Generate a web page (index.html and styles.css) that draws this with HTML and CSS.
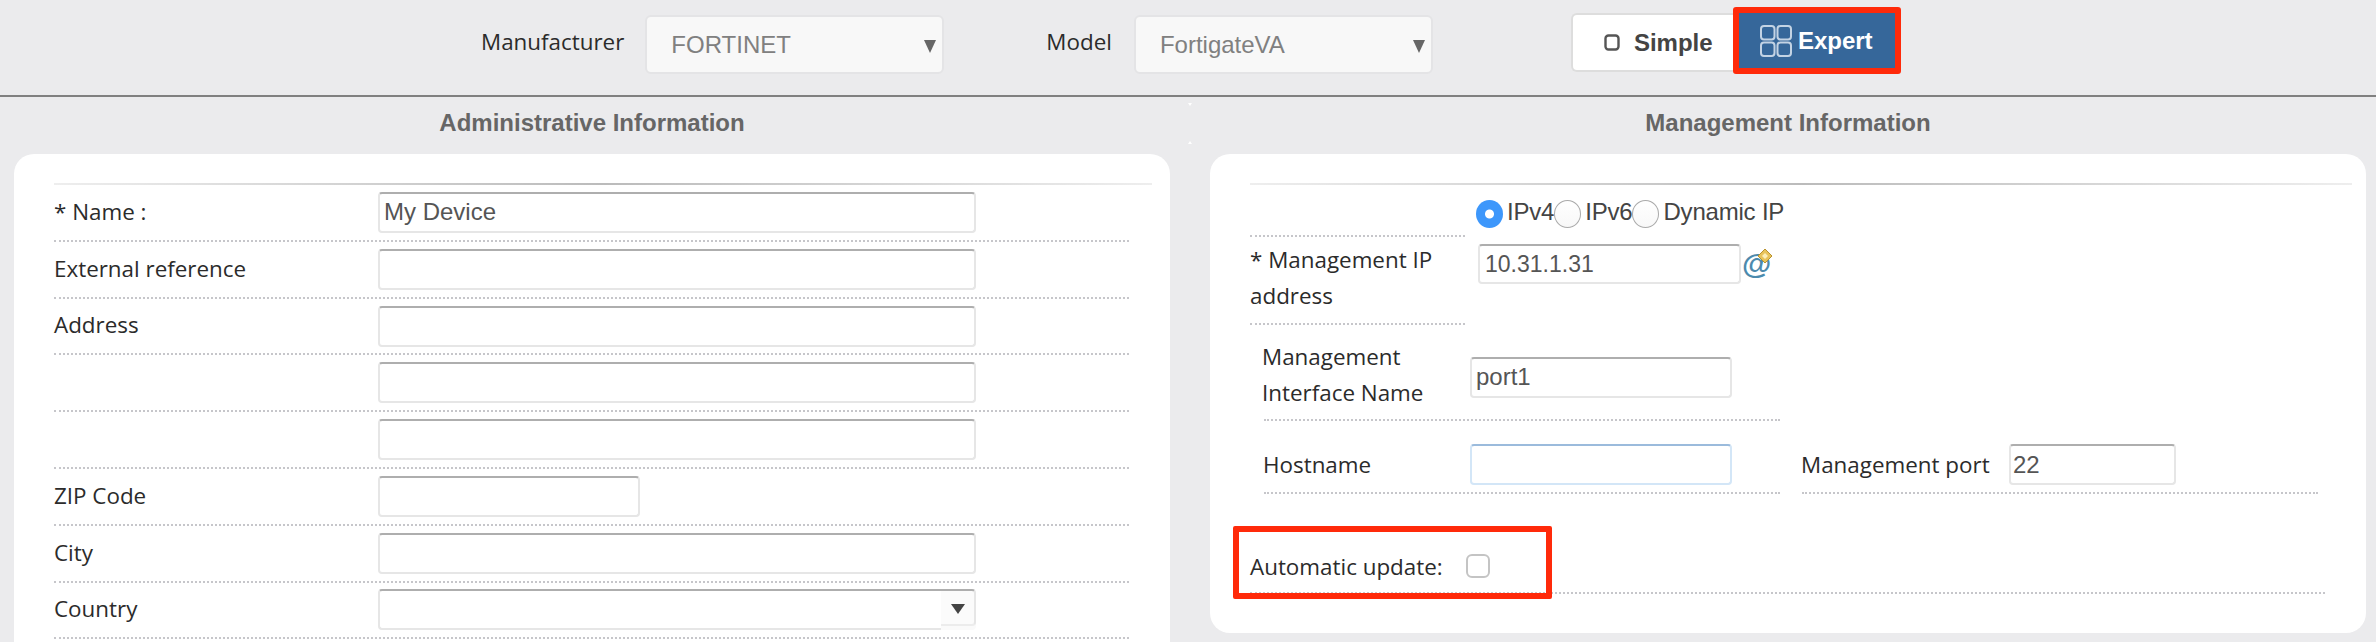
FILE: index.html
```html
<!DOCTYPE html>
<html lang="en">
    <head>
        <meta charset="UTF-8">
        <meta name="viewport" content="width=device-width, initial-scale=1.0">
        <title>Device settings</title>
        <link rel="stylesheet" href="styles.css">
    </head>
    <body>
        <div id="topbar">
            <label class="top_label">Manufacturer</label>
            <div class="top_select">
                <span>FORTINET</span>
                <span class="top_arrow"></span>
            </div>
            <label class="top_label model_label">Model</label>
            <div class="top_select">
                <span>FortigateVA</span>
                <span class="top_arrow"></span>
            </div>
            <div class="toggle">
                <div class="toggle_simple">
                    <svg class="icon_simple" width="16" height="17" viewBox="0 0 16 17"><rect x="1.5" y="1.5" width="13" height="14" rx="3" fill="#fff" stroke="#555" stroke-width="2.4"/></svg>
                    Simple
                </div>
                <div class="toggle_expert">
                    <svg class="icon_expert" width="32" height="32" viewBox="0 0 32 32">
                        <rect x="1" y="1" width="13.5" height="13.5" rx="3"/>
                        <rect x="17.5" y="1" width="13.5" height="13.5" rx="3"/>
                        <rect x="1" y="17.5" width="13.5" height="13.5" rx="3"/>
                        <rect x="17.5" y="17.5" width="13.5" height="13.5" rx="3"/>
                    </svg>
                    Expert
                </div>
            </div>
        </div>
        <div id="container">
            <div class="column">
                <h2 class="col_title">Administrative Information</h2>
                <div class="card admin_card">
                    <div class="rule"></div>
                    <div class="admin_row">
                        <label>* Name :</label>
                        <input type="text" class="field" value="My Device"/>
                    </div>
                    <div class="admin_row">
                        <label>External reference</label>
                        <input type="text" class="field"/>
                    </div>
                    <div class="admin_row">
                        <label>Address</label>
                        <input type="text" class="field"/>
                    </div>
                    <div class="admin_row">
                        <label></label>
                        <input type="text" class="field"/>
                    </div>
                    <div class="admin_row">
                        <label></label>
                        <input type="text" class="field"/>
                    </div>
                    <div class="admin_row">
                        <label>ZIP Code</label>
                        <input type="text" class="field zip"/>
                    </div>
                    <div class="admin_row">
                        <label>City</label>
                        <input type="text" class="field"/>
                    </div>
                    <div class="admin_row">
                        <label>Country</label>
                        <div class="combo">
                            <input type="text" class="field combo_input"/>
                            <span class="combo_btn"><span class="combo_arrow"></span></span>
                        </div>
                    </div>
                </div>
            </div>
            <div class="splitter">
                <span class="split_down"></span>
                <span class="split_up"></span>
            </div>
            <div class="column">
                <h2 class="col_title">Management Information</h2>
                <div class="card mgmt_card">
                    <div class="rule"></div>
                    <div class="ip_row radio_row">
                        <div class="ip_label"></div>
                        <div class="radios">
                            <input type="radio" name="ipmode" checked/><span>IPv4</span>
                            <input type="radio" name="ipmode"/><span>IPv6</span>
                            <input type="radio" name="ipmode"/><span>Dynamic IP</span>
                        </div>
                    </div>
                    <div class="ip_row addr_row">
                        <div class="ip_label">* Management IP address</div>
                        <div class="addr_cell">
                            <input type="text" class="field addr" value="10.31.1.31"/>
                            <svg class="icon_at" width="32" height="32" viewBox="0 0 32 32">
                                <text x="0" y="26" class="at_glyph">@</text>
                                <polygon points="23,1 30,8 23,15 16,8" fill="#e8c35a" stroke="#b8922e"/>
                                <polygon points="23,5 26,8 23,11 20,8" fill="#fbeeb8"/>
                            </svg>
                        </div>
                    </div>
                    <div class="sub_row iface_row">
                        <label>Management Interface Name</label>
                        <input type="text" class="field iface" value="port1"/>
                    </div>
                    <div class="host_row">
                        <div class="sub_row host_field">
                            <label>Hostname</label>
                            <input type="text" class="field iface focused"/>
                        </div>
                        <div class="sub_row port_field">
                            <label>Management port</label>
                            <input type="text" class="field port" value="22"/>
                        </div>
                    </div>
                    <div class="update_row">
                        <label>Automatic update:</label>
                        <input type="checkbox" class="check"/>
                        <div class="red_box"></div>
                    </div>
                </div>
            </div>
        </div>
    </body>
</html>
```

FILE: styles.css
```css
html,body{
    margin:0;
    height:642px;
    overflow:hidden;
}
body{
    background:#ebebed;
    font-family:"Open Sans",sans-serif;
    font-size:22.4px;
    color:#2b2b2b;
}
#topbar{
    height:97px;
    box-sizing:border-box;
    display:flex;
    align-items:flex-start;
    padding-left:481px;
    border-bottom:2px solid #808080;
}
.top_label{
    margin-top:27px;
    line-height:30px;
    margin-right:21px;
}
.model_label{
    margin-left:102px;
    margin-right:22px;
}
.top_select{
    width:299px;
    height:59px;
    margin-top:15px;
    box-sizing:border-box;
    padding:0 6px 0 24px;
    display:flex;
    align-items:center;
    justify-content:space-between;
    background:#f8f8f8;
    border:2px solid #e4e4e6;
    border-radius:6px;
    font-family:"Liberation Sans",sans-serif;
    font-size:24px;
    color:#808080;
}
.top_arrow{
    width:0;
    height:0;
    margin-top:3px;
    border-left:6px solid transparent;
    border-right:6px solid transparent;
    border-top:13px solid #666;
}
.toggle{
    display:flex;
    margin-left:138px;
    margin-top:7px;
    font-family:"Liberation Sans",sans-serif;
    font-size:24px;
    font-weight:bold;
}
.toggle_simple{
    width:162px;
    height:59px;
    margin-top:6px;
    box-sizing:border-box;
    display:flex;
    align-items:center;
    padding-left:31px;
    gap:14px;
    background:#fff;
    color:#444;
    border:2px solid #ddd;
    border-right:none;
    border-radius:6px 0 0 6px;
}
.toggle_expert{
    width:168px;
    height:67px;
    box-sizing:border-box;
    display:flex;
    align-items:center;
    padding-left:21px;
    gap:6px;
    background:#36679a;
    color:#fff;
    border:6px solid #ff2a0a;
    border-radius:3px;
}
.icon_expert rect{
    fill:#36679a;
    stroke:#c3d3e4;
    stroke-width:2;
}
#container{
    display:grid;
    grid-template-columns:1156px 40px 1156px;
    padding-left:14px;
}
.col_title{
    margin:0;
    height:57px;
    box-sizing:border-box;
    padding-top:12px;
    text-align:center;
    font-family:"Liberation Sans",sans-serif;
    font-size:24px;
    line-height:28px;
    font-weight:bold;
    color:#666;
}
.card{
    background:#fff;
    border-radius:20px;
    box-sizing:border-box;
    padding:29px 14px 0 40px;
}
.admin_card{
    height:488px;
    border-radius:20px 20px 0 0;
}
.mgmt_card{
    height:479px;
}
.rule{
    height:2px;
    background:linear-gradient(90deg,#eeeeee,#bbbbbb 50%,#eeeeee);
}
.admin_card .rule{
    margin-right:4px;
}
.admin_row{
    display:flex;
    align-items:center;
    height:56.8px;
    box-sizing:border-box;
    padding-top:7px;
    padding-bottom:7px;
    margin-right:27px;
    border-bottom:2px dotted #c6c6ca;
}
.admin_row label{
    width:324px;
    flex:none;
    margin-top:-2px;
}
.field{
    box-sizing:border-box;
    width:598px;
    height:41px;
    margin:0;
    padding:0 4px;
    background:#fff;
    border:2px solid #e6e6e6;
    border-top-color:#aeaeae;
    border-radius:4px;
    outline:none;
    font-family:"Liberation Sans",sans-serif;
    font-size:24px;
    color:#555;
}
.zip{
    width:262px;
}
.combo{
    display:flex;
    width:598px;
    height:41px;
}
.combo_input{
    width:563px;
    border-right:none;
    border-radius:4px 0 0 4px;
}
.combo_btn{
    width:35px;
    height:37px;
    box-sizing:border-box;
    display:flex;
    align-items:center;
    justify-content:center;
    background:#fbfbfb;
    border-top:2px solid #aeaeae;
    border-right:2px solid #e6e6e6;
    border-bottom:2px solid #ececec;
    border-radius:0 4px 4px 0;
    box-shadow:0 4px 0 #fafafa;
}
.combo_arrow{
    width:0;
    height:0;
    margin-top:3px;
    border-left:7px solid transparent;
    border-right:7px solid transparent;
    border-top:10px solid #444;
}
.splitter{
    position:relative;
}
.split_down,.split_up{
    position:absolute;
    left:18px;
    width:0;
    height:0;
    border-left:2px solid transparent;
    border-right:2px solid transparent;
}
.split_down{
    top:6px;
    border-top:3px solid #fff;
}
.split_up{
    top:44px;
    border-bottom:3px solid #fff;
}
.ip_row{
    display:flex;
}
.ip_label{
    width:215px;
    box-sizing:border-box;
    flex:none;
    margin-right:11px;
    line-height:36px;
    border-bottom:2px dotted #c6c6ca;
}
.radio_row{
    height:52px;
}
.radios{
    display:flex;
    align-items:flex-start;
    padding-top:15px;
    font-family:"Liberation Sans",sans-serif;
    font-size:24px;
    line-height:24px;
    color:#444;
}
.radios span{
    margin:0 0 0 4px;
    letter-spacing:-0.2px;
}
.radios input{
    appearance:none;
    width:27px;
    height:28px;
    margin:0;
    border:1px solid #aaa;
    border-radius:50%;
    background:linear-gradient(#fff,#f8f8f8);
    flex:none;
}
.radios input:checked{
    border:none;
    background:radial-gradient(circle,#fff 0,#fff 4px,#3d97fb 5px);
}
.addr_row{
    height:88px;
}
.addr_row .ip_label{
    padding-top:5px;
    height:88px;
}
.addr_cell{
    display:flex;
    align-items:flex-start;
    padding:7px 0 0 2px;
}
.addr{
    width:263px;
    height:40px;
    padding-left:5px;
    font-size:23px;
}
.icon_at{
    margin:4px 0 0 1px;
}
.at_glyph{
    font-family:"Liberation Sans",sans-serif;
    font-size:30px;
    font-weight:bold;
    fill:#4c8aad;
}
.sub_row{
    display:flex;
    align-items:center;
    border-bottom:2px dotted #c6c6ca;
    box-sizing:border-box;
}
.sub_row label{
    flex:none;
}
.iface_row{
    width:516px;
    height:96px;
    margin-left:14px;
    padding-top:10px;
    line-height:36px;
}
.iface_row label{
    width:206px;
    margin:-5px 2px 0 -2px;
}
.iface{
    width:262px;
}
.host_row{
    display:flex;
    gap:22px;
    margin-left:14px;
}
.host_field,.port_field{
    width:516px;
    height:73px;
    padding-top:16px;
}
.host_field label{
    width:206px;
    margin-left:-1px;
    margin-right:1px;
}
.port_field label{
    width:207px;
    margin-left:-1px;
    margin-right:1px;
}
.port{
    width:167px;
    padding-left:2px;
}
.focused{
    border-color:#d3e6f7;
    border-top-color:#9bbbdc;
}
.update_row{
    position:relative;
    display:flex;
    align-items:center;
    width:1075px;
    height:100px;
    box-sizing:border-box;
    padding-top:46px;
    border-bottom:2px dotted #c6c6ca;
}
.update_row label{
    width:216px;
    flex:none;
}
.check{
    appearance:none;
    width:24px;
    height:24px;
    margin:0;
    border:2px solid #c4c4c4;
    border-radius:6px;
    background:#fff;
}
.red_box{
    position:absolute;
    left:-17px;
    top:32px;
    width:319px;
    height:73px;
    box-sizing:border-box;
    border:6px solid #ff2a0a;
    border-radius:2px;
}
```
